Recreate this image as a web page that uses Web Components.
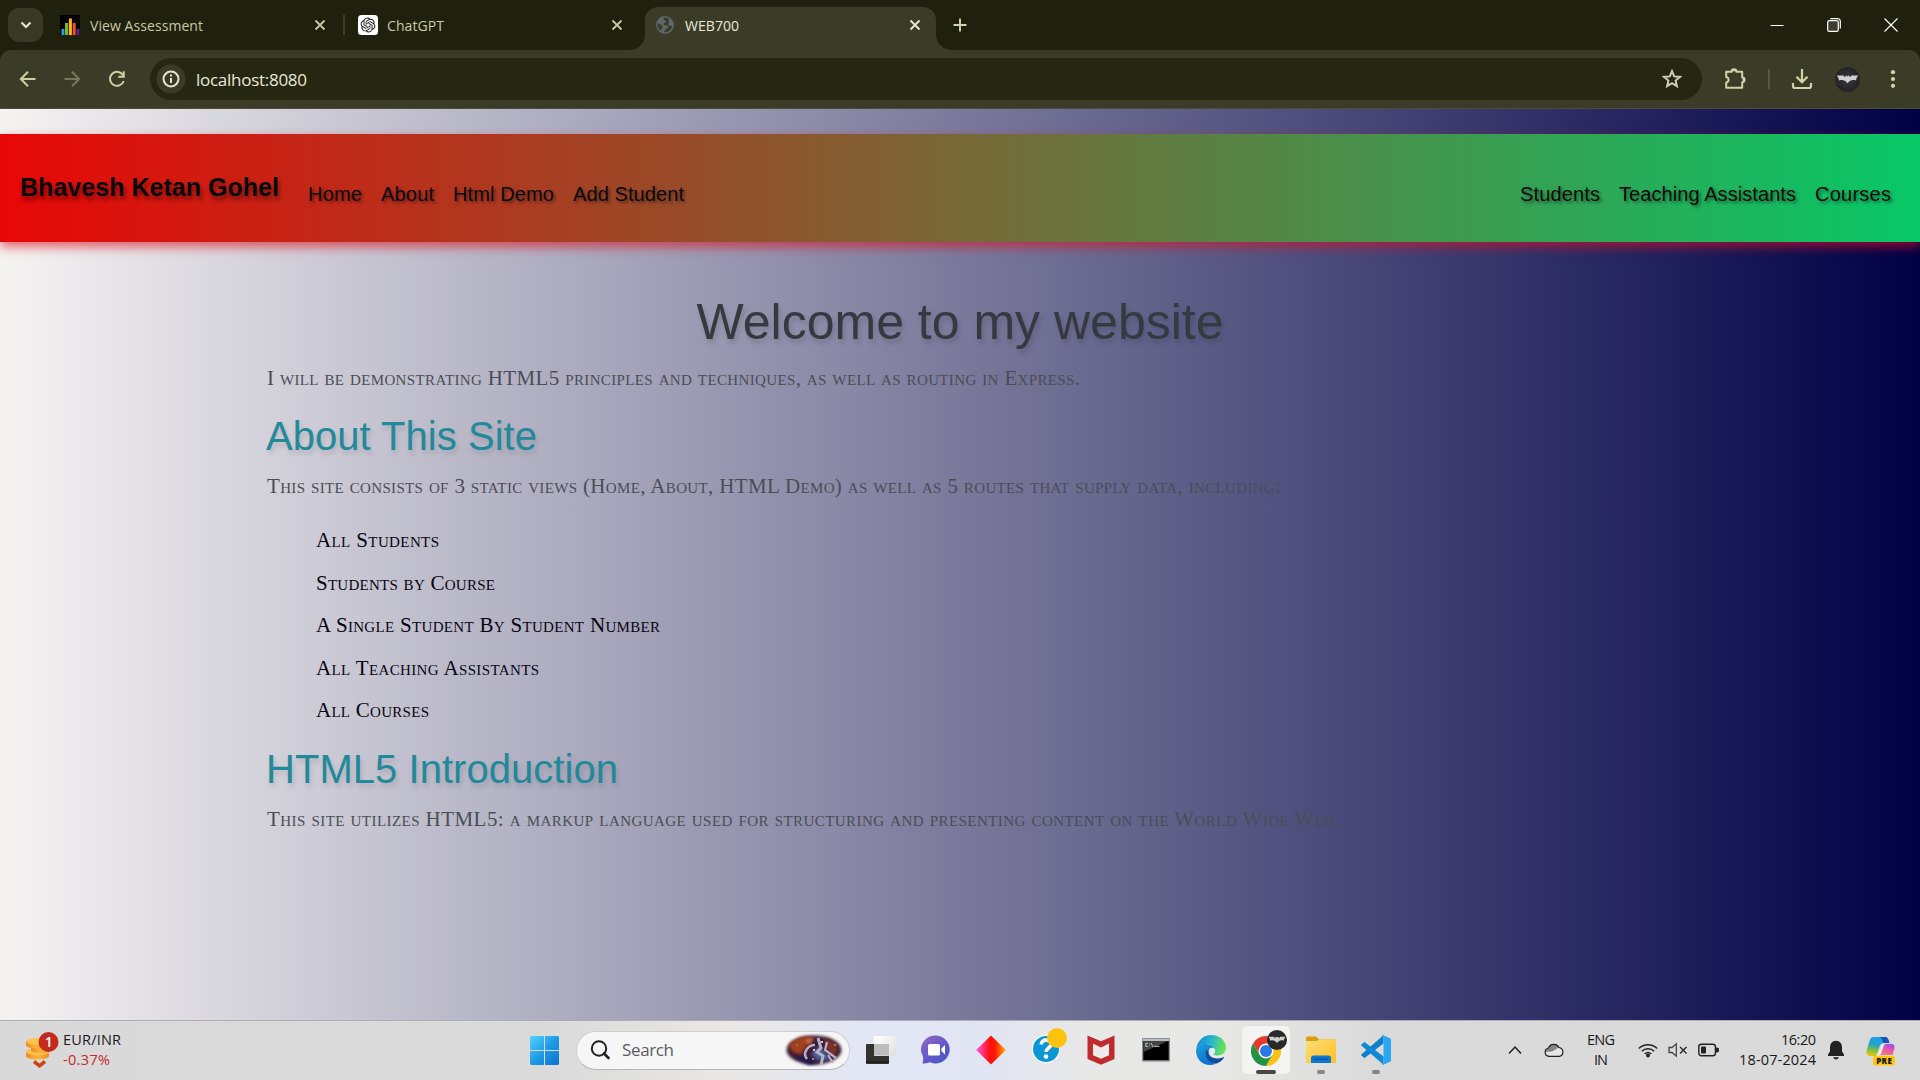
<!DOCTYPE html>
<html lang="en">
<head>
<meta charset="utf-8">
<title>WEB700</title>
<style>
html,body{margin:0;padding:0;width:1920px;height:1080px;overflow:hidden;background:#1f200d}
body{font-family:"Open Sans","Noto Sans",sans-serif}
</style>
</head>
<body>
<desktop-screen></desktop-screen>
<script>
const define=(name,html)=>customElements.define(name,class extends HTMLElement{
  constructor(){super();this.attachShadow({mode:'open'}).innerHTML=html;}
});

/* Single line of text spread over a given width through letter-spacing */
customElements.define('fit-text',class extends HTMLElement{
  constructor(){
    super();
    this.attachShadow({mode:'open'}).innerHTML='<style>:host{display:block;white-space:nowrap;flex:none}span{display:inline-block;font-variant-ligatures:none}</style><span><slot></slot></span>';
  }
  connectedCallback(){
    const w=+this.getAttribute('w'),s=this.shadowRoot.querySelector('span'),n=this.textContent.length;
    this.style.width=w+'px';
    s.style.letterSpacing=((w-s.getBoundingClientRect().width)/(n-1)).toFixed(3)+'px';
  }
});

const bat='<path d="M1.5 8.5H8.6L9.8 10.2 11.3 8.2 12 9.2H13L13.7 8.2 15.2 10.2 16.4 8.5H23.5C21.9 9.7 21.3 11.4 21.1 13.4 18.6 12.5 16.2 13 14.6 14.1L12.5 16.3 10.4 14.1C8.8 13 6.4 12.5 3.9 13.4 3.7 11.4 3.1 9.7 1.5 8.5Z" fill="#cfcfcf"/>';
const icons={
chevron:[14,14,'<path d="M2.5 4.5 7 9 11.5 4.5" fill="none" stroke="#e4e3d0" stroke-width="2.2"/>'],
bars:[20,20,'<path fill="#000" d="M0 0h20v20H0z"/><path fill="#1ba1e8" d="M1.5 14h3v6h-3z"/><path fill="#76b82a" d="M5 8h3.2v12H5z"/><path fill="#fdb913" d="M8.9 3.5h3V20h-3z"/><path fill="#f0522a" d="M12.7 8h3v12h-3z"/><path fill="#5c2483" d="M16.5 14h3v6h-3z"/>'],
gpt:[20,20,'<rect width="20" height="20" rx="3.5" fill="#fff"/><path transform="translate(2.600 2.600) scale(.617)" fill="#1c1c1c" d="M22.282 9.821a5.985 5.985 0 0 0-.516-4.910 6.046 6.046 0 0 0-6.510-2.900A6.065 6.065 0 0 0 4.981 4.182a5.985 5.985 0 0 0-3.998 2.900 6.046 6.046 0 0 0 .743 7.097 5.980 5.980 0 0 0 .510 4.911 6.051 6.051 0 0 0 6.515 2.900A5.985 5.985 0 0 0 13.260 24a6.056 6.056 0 0 0 5.772-4.206 5.990 5.990 0 0 0 3.998-2.900 6.056 6.056 0 0 0-.748-7.073zM13.260 22.430a4.476 4.476 0 0 1-2.876-1.040l.142-.081 4.778-2.758a.795.795 0 0 0 .393-.681v-6.737l2.020 1.169a.071.071 0 0 1 .038.052v5.583a4.504 4.504 0 0 1-4.495 4.493zM3.600 18.304a4.471 4.471 0 0 1-.535-3.014l.142.085 4.783 2.759a.771.771 0 0 0 .781 0l5.843-3.369v2.332a.080.080 0 0 1-.033.062L9.740 19.950a4.500 4.500 0 0 1-6.140-1.646zM2.341 7.896a4.485 4.485 0 0 1 2.366-1.973V11.600a.766.766 0 0 0 .388.677l5.815 3.354-2.020 1.169a.076.076 0 0 1-.071 0l-4.830-2.787A4.504 4.504 0 0 1 2.341 7.872zm16.597 3.856-5.834-3.388L15.119 7.200a.076.076 0 0 1 .071 0l4.830 2.792a4.494 4.494 0 0 1-.676 8.104v-5.677a.790.790 0 0 0-.406-.667zm2.010-3.023-.142-.085-4.773-2.782a.776.776 0 0 0-.786 0L9.410 9.230V6.897a.066.066 0 0 1 .028-.061l4.830-2.787a4.499 4.499 0 0 1 6.680 4.660zM8.307 12.863l-2.020-1.164a.080.080 0 0 1-.038-.057V6.074a4.499 4.499 0 0 1 7.376-3.453l-.142.080L8.704 5.459a.795.795 0 0 0-.393.681zm1.097-2.366 2.602-1.500 2.607 1.500v3l-2.597 1.500-2.607-1.500z"/>'],
globe:[18,18,'<circle cx="9" cy="9" r="8.9" fill="#62656d"/><path d="M2 6.500C3 9 6 8 6.600 10.200 7 12 5.200 12.600 5 14.700L3 13.500C1.200 10.800 1.200 8.800 2 6.500ZM8 1.600C6.600 3.200 8 4.400 10.200 5 10.300 6.800 7.600 6.600 7.600 8.400 8.300 10 11.500 8.900 12.600 10.300 12.900 12.200 9.800 12.300 9.300 13.400 9 14.900 7.700 15.400 8.200 16.500 12.800 16.600 16 13.200 16.100 10 14.600 10.500 13.800 9 12 8.800 11.600 7.400 13.600 6.800 12.800 5.200 12.300 4 13.600 3.300 12.600 2.600 11.200 1.800 9.400 1.500 8 1.600Z" fill="#3b3c27"/>'],
close:[12,12,'<path d="M1.500 1.500 10.500 10.500M10.500 1.500 1.500 10.500" stroke="currentColor" stroke-width="1.800" fill="none"/>'],
plus:[14,14,'<path d="M7 .5V13.500M.5 7H13.500" stroke="#d3d3ab" stroke-width="1.900"/>'],
min:[14,14,'<path d="M.5 7.500H13.500" stroke="#fff" stroke-width="1"/>'],
restore:[14,14,'<rect x=".7" y="2.700" width="10.600" height="10.600" rx="1.600" fill="#77776c" fill-opacity=".35" stroke="#fff" stroke-width="1.200"/><path d="M3.200.7H10.800A2.500 2.500 0 0 1 13.300 3.200V10.500" fill="none" stroke="#fff" stroke-width="1.200"/>'],
wclose:[14,14,'<path d="M.5.5 13.500 13.500M13.500.5.5 13.500" stroke="#fff" stroke-width="1.200"/>'],
back:[18,18,'<path d="M16.500 9H2.200M9 1.800 1.800 9 9 16.200" fill="none" stroke="#cdcda6" stroke-width="2"/>'],
fwd:[18,18,'<path d="M1.500 9H15.800M9 1.800 16.200 9 9 16.200" fill="none" stroke="#77775f" stroke-width="2"/>'],
reload:[18,18,'<path d="M15.200 5.500A7 7 0 1 0 15.700 11" fill="none" stroke="#cdcda6" stroke-width="2"/><path d="M15.800 1.200V6.800H10.200" fill="none" stroke="#cdcda6" stroke-width="2"/>'],
info:[30,30,'<circle cx="15" cy="15" r="14.500" fill="#3b3c27"/><circle cx="15" cy="15" r="7.500" fill="none" stroke="#e6e5d0" stroke-width="2"/><path d="M15 14V19M15 10.500V12.400" stroke="#e6e5d0" stroke-width="2"/>'],
star:[20,20,'<path d="M10 2.200 12.200 7.400 17.900 7.900 13.600 11.600 14.900 17.200 10 14.200 5.100 17.200 6.400 11.600 2.100 7.900 7.800 7.400Z" fill="none" stroke="#ceceb9" stroke-width="2"/>'],
puzzle:[22,22,'<path d="M2.200 3.700H7.600A2.300 2.300 0 0 1 12.400 3.700H18.200V9.400A2.300 2.300 0 0 1 18.200 14.200V19.800H2.200V14.600A2.900 2.900 0 0 0 2.200 8.900Z" fill="none" stroke="#d3d3ab" stroke-width="2" stroke-linejoin="round"/><path d="M7.800 3.200A2.200 2.200 0 0 1 12.200 3.200ZM18.600 9.600A2.200 2.200 0 0 1 18.600 14Z" fill="#d3d3ab"/>'],
download:[22,22,'<path d="M11 1V13.500M5.500 8.700 11 14.200 16.500 8.700" fill="none" stroke="#d3d3ab" stroke-width="2.200"/><path d="M2 15V18A2 2 0 0 0 4 20H18A2 2 0 0 0 20 18V15" fill="none" stroke="#d3d3ab" stroke-width="2.200"/>'],
batman:[25,25,'<defs><radialGradient id="b"><stop offset="0" stop-color="#3a3a3e"/><stop offset="1" stop-color="#222226"/></radialGradient></defs><circle cx="12.500" cy="12.500" r="12.500" fill="url(#b)"/>'+bat],
dots:[6,20,'<g fill="#d3d3ab"><circle cx="3" cy="3.200" r="2.100"/><circle cx="3" cy="10" r="2.100"/><circle cx="3" cy="16.800" r="2.100"/></g>'],
coins:[36,40,'<defs><linearGradient id="c"><stop offset="0" stop-color="#e9861d"/><stop offset=".5" stop-color="#ffb53c"/><stop offset="1" stop-color="#ef8f1e"/></linearGradient></defs><path d="M1 22V26C1 30.500 24 30.500 24 26V22Z" fill="url(#c)"/><ellipse cx="12.500" cy="21.800" rx="11.500" ry="3.600" fill="#ffc04c"/><path d="M6 15.500V20C6 24 25 24 25 20V15.500Z" fill="url(#c)"/><ellipse cx="15.500" cy="15.500" rx="9.500" ry="3" fill="#ffc04c"/><path d="M1 11.500V15C1 19.500 20 19.500 20 15V11.500Z" fill="url(#c)"/><ellipse cx="10.500" cy="11.300" rx="9.500" ry="3.300" fill="#ffc355"/><path d="M9 31.500 14.500 35.800 20 31.500" fill="none" stroke="#cf4517" stroke-width="3.600"/><circle cx="23.500" cy="12" r="10" fill="#c42b1c"/><text x="23.700" y="17" font-family="Open Sans" font-size="14" font-weight="600" text-anchor="middle" fill="#fff">1</text>'],
win:[29,29,'<defs><linearGradient id="w2" x1="0" y1="0" x2="29" y2="29" gradientUnits="userSpaceOnUse"><stop offset="0" stop-color="#52d5ff"/><stop offset=".5" stop-color="#1f9be6"/><stop offset="1" stop-color="#0873d0"/></linearGradient></defs><path fill="url(#w2)" d="M1 0H14V14H0V1ZM15 0H28L29 1V14H15ZM0 15H14V29H1L0 28ZM15 15H29V28L28 29H15Z"/>'],
search:[20,20,'<circle cx="9" cy="8.500" r="7.200" fill="none" stroke="#222" stroke-width="2"/><path d="M14 13.500 18.500 18" stroke="#222" stroke-width="2.600" stroke-linecap="round"/>'],
nebula:[62,34,'<defs><filter id="f" x="-20%" y="-20%" width="140%" height="140%"><feGaussianBlur stdDeviation="1.500"/></filter><filter id="g"><feGaussianBlur stdDeviation=".6"/></filter></defs><ellipse cx="31" cy="17" rx="27.500" ry="14.500" fill="#3c1f35" filter="url(#f)"/><g filter="url(#f)"><path d="M6 13C11 4 25 2 31 5L24 13 18 21C12 21 8 18 6 13Z" fill="#a13f1e"/><path d="M41 6C49 7 54 10 55 17L50 24 43 15Z" fill="#7b3028"/><path d="M12 24C23 20 27 29 37 30L26 32Z" fill="#1d1848"/><path d="M28 21 36 13 43 20 47 27 34 27Z" fill="#50619c"/><path d="M22 7 31 5 27 12Z" fill="#d2703c"/></g><g fill="none" stroke="#b3b2ca" filter="url(#g)"><path d="M35 5 38 15 34 19 40 23 38 32" stroke-width="3"/><path d="M44 9 42 17 53 25M45 22 50 30" stroke-width="2.200"/><path d="M24 26C19 20 25 12 32 12" stroke-width="2.500"/></g><g fill="#fff"><circle cx="31" cy="17" r="1"/><circle cx="30" cy="26" r=".8"/><circle cx="39" cy="9" r="1"/><circle cx="52" cy="12" r=".7"/><circle cx="14" cy="12" r=".5"/></g>'],
taskview:[30,28,'<defs><linearGradient id="t" x2="1" y2="1"><stop offset="0" stop-color="#fff"/><stop offset="1" stop-color="#e0e0e2"/></linearGradient></defs><rect y="8" width="23" height="20" rx="1" fill="#32322f"/><path d="M0 26H23" stroke="#111"/><rect x="8" width="22" height="20" rx="1" fill="url(#t)"/><path d="M8 8H23V19.500H8Z" fill="#bcbcbc"/>'],
chat:[30,30,'<defs><linearGradient id="h" x1="0" y1="0" x2=".7" y2="1"><stop offset="0" stop-color="#9a68b8"/><stop offset=".5" stop-color="#6a5bcb"/><stop offset="1" stop-color="#4e55c8"/></linearGradient></defs><path d="M15 .5A14 14 0 1 1 9 27.300Q5 29 1.300 28.200 2.600 25.500 2 21.500A14 14 0 0 1 15 .5Z" fill="url(#h)"/><rect x="7" y="9" width="12" height="11.500" rx="1.500" fill="#fff"/><path d="M20.500 13.500 24 10V19.500L20.500 16Z" fill="#fff"/>'],
diamond:[30,30,'<defs><linearGradient id="d"><stop offset="0" stop-color="#ff55e0"/><stop offset=".45" stop-color="#ff1010"/><stop offset=".65" stop-color="#ff1c00"/><stop offset="1" stop-color="#ffb400"/></linearGradient></defs><path d="M15 .5 29.800 15 15 29.500.2 15Z" fill="url(#d)"/>'],
help:[38,38,'<circle cx="16" cy="21" r="14.300" fill="#fff"/><circle cx="16" cy="21" r="13" fill="#0a97d5"/><path d="M11.300 16.500C11.300 10.500 21 10.800 21 16.300 21 20 16 20 16 24" fill="none" stroke="#fff" stroke-width="3.600"/><circle cx="16" cy="28.600" r="2.300" fill="#fff"/><circle cx="27" cy="10" r="10" fill="#ffc20e"/>'],
mcafee:[28,30,'<path d="M.5.5 14 6.300 27.500.5V24L14 29.800.5 24Z" fill="#c02b2f"/><path d="M6 8.500 14 12.500 22 8.500V20.200L14 23.800 6 20.200Z" fill="#eeeae7"/>'],
cmd:[28,24,'<rect x=".6" y=".6" width="26.800" height="22.300" fill="#000" stroke="#8b9096" stroke-width="1.400"/><path d="M1 2H27" stroke="#ccd1d8" stroke-width="1.800"/><path d="M1.500 3H26L1.500 14Z" fill="#444"/><path d="M5.800 5.300H3.800V8.500H5.800M7.300 5.500V6.300M7.300 7.700V8.500M9 5 11 8.800M12 8.300H17.500" stroke="#ddd" fill="none" stroke-width=".9"/>'],
edge:[30,30,'<defs><linearGradient id="e1" x1="0" y1=".2" x2="1" y2=".4"><stop offset="0" stop-color="#1287d8"/><stop offset=".5" stop-color="#28b5cf"/><stop offset="1" stop-color="#67e64c"/></linearGradient><linearGradient id="e2" x1="0" y1="0" x2=".6" y2="1"><stop offset="0" stop-color="#1ba0d8"/><stop offset="1" stop-color="#0b71cf"/></linearGradient></defs><path d="M.3 14A15 15 0 0 1 15 0C24 0 30 6 30 12.500 30 17.500 26 20.500 21.500 20.500 18 20.500 16.800 19.200 17.500 18 18.500 16.500 18 9 10.500 9 5 9 1 11 .3 14Z" fill="url(#e1)"/><path d="M.1 15C1 10.500 5.500 8.600 10 9 15 9.300 18.500 12 18.200 16 16 14 12 15.500 12 20 12 25.500 17 29 20 28.700 10 33-.5 26 .1 15Z" fill="url(#e2)"/><path d="M10 15C8 23 14 28 20 28.700 24 27.500 27 25 28 22.500 27.800 21.700 27 22.300 26 22.700 19 25 12 22 12.200 15.800Z" fill="#124c98"/><circle cx="16" cy="16" r="3.200" fill="#dfe9ef"/>'],
chrome:[40,40,'<g transform="translate(-1 0)"><path d="M16 15.500H29A15 15 0 0 1 16 38L22.500 26.700Z" fill="#fbc116"/><path d="M9.500 26.700 3 15.500A15 15 0 0 0 16 38L22.500 26.700Z" fill="#229342"/><path d="M3 15.500A15 15 0 0 1 29 15.500H16L9.500 26.700Z" fill="#e33b2e"/><circle cx="16" cy="23" r="7.500" fill="#fff"/><circle cx="16" cy="23" r="6" fill="#2878e8"/></g><g transform="translate(16 2) scale(.8)"><circle cx="12.500" cy="12.500" r="12.500" fill="#29292b"/>'+bat+'</g>'],
folder:[30,28,'<defs><linearGradient id="o" x2="1" y2="1"><stop offset="0" stop-color="#ffe07a"/><stop offset="1" stop-color="#ffbd22"/></linearGradient></defs><path d="M0 2A1.500 1.500 0 0 1 1.500.5H10L13 3.500H30V12H0Z" fill="#dd9c09"/><path d="M0 5H10.500L13.500 3.500H29A1 1 0 0 1 30 4.500V27H0Z" fill="url(#o)"/><path d="M5 27V22A2.500 2.500 0 0 1 7.500 19.500H22.500A2.500 2.500 0 0 1 25 22V27Z" fill="#0a78d1"/><path d="M8.500 23.200H21.500" stroke="#064f94" stroke-width="1.300"/>'],
vscode:[30,30,'<path d="M22.500.3V8.500L3.500 23 .3 20.500V19.500Z" fill="#0f7fca"/><path d="M.3 9.500 3.500 7 22.500 21.500V29.700L.3 10.500Z" fill="#1089d6"/><path d="M21 .8 22.300.2 29 3.200Q30 3.800 30 5V25Q30 26.200 29 26.800L22.300 29.800 21 29.200 22.500 28V2Z" fill="#2aa6f2"/>'],
up:[14,10,'<path d="M1 8.500 7 2 13 8.500" fill="none" stroke="#222" stroke-width="1.500"/>'],
cloud:[20,16,'<path d="M5 14.300A4.200 4.200 0 0 1 4.500 6 5.800 5.800 0 0 1 15 5.500 4.500 4.500 0 0 1 15.500 14.300Z" fill="#e6e6e6"/><path d="M1.500 10C1.800 7 3.500 6 4.800 6 6.500.3 13.500 1 15 5.500L8 9.500Z" fill="#858585"/><path d="M5 14.300A4.200 4.200 0 0 1 4.500 6 5.800 5.800 0 0 1 15 5.500 4.500 4.500 0 0 1 15.500 14.300Z" fill="none" stroke="#222" stroke-width="1.200"/>'],
wifi:[20,16,'<g fill="none" stroke="#222" stroke-width="1.400"><path d="M.8 6.500A13 13 0 0 1 19.200 6.500M3.800 9.300A8.800 8.800 0 0 1 16.200 9.300M6.700 12A5 5 0 0 1 13.300 12"/></g><circle cx="10" cy="13.500" r="1.900" fill="#222"/>'],
mute:[20,16,'<path d="M1 5.500H4L8.300 1.800V14.200L4 10.500H1Z" fill="none" stroke="#444" stroke-width="1.300"/><path d="M12 5 18.500 11.500M18.500 5 12 11.500" stroke="#222" stroke-width="1.300"/>'],
battery:[21,16,'<rect x=".8" y="2.200" width="16.600" height="11.600" rx="2.500" fill="none" stroke="#222" stroke-width="1.400"/><rect x="3" y="4.500" width="5" height="7" rx="1" fill="#222"/><path d="M18 6H19A1.500 1.500 0 0 1 19 10H18Z" fill="#222" stroke="#222"/>'],
bell:[18,20,'<path d="M9 .8C5 .8 3 4 3 7.500V11.500L1 14.500V16H17V14.500L15 11.500V7.500C15 4 13 .8 9 .8Z" fill="#222"/><path d="M6 17.300H12L10.500 19.300H7.500Z" fill="#222"/>'],
copilot:[30,30,'<defs><linearGradient id="p1" x1=".4" y1="0" x2=".2" y2="1"><stop offset="0" stop-color="#1aa0ea"/><stop offset=".4" stop-color="#21a6c4"/><stop offset=".7" stop-color="#86bf3d"/><stop offset="1" stop-color="#f2c50d"/></linearGradient><linearGradient id="p2" x1=".7" y1="0" x2=".2" y2="1"><stop offset="0" stop-color="#a04cf0"/><stop offset=".5" stop-color="#ec5aa4"/><stop offset="1" stop-color="#ff8753"/></linearGradient></defs><path d="M8 1H19C21 1 22 2.500 22.500 4L23.500 7H18C15 7 14 9 13.300 11.500L11 18.500C10.500 20 9 20.500 7 20H3C.5 19 0 17 .8 14L3.500 5C4.200 2.500 5.500 1 8 1Z" fill="url(#p1)"/><path d="M14 1H19C21 1 22 2.500 22.500 4L23.500 7H17C16.500 4 16 2 14 1Z" fill="#174fc4"/><path d="M19 8H25C28 8 29 10 28.300 13L26.500 19H11C13 19 14 17 14.700 15L16 11C16.500 9 17.500 8 19 8Z" fill="url(#p2)"/><path d="M17 8H19C17.500 9 16.500 14 15.500 17 15 18.500 14 19 12 19H10.500Z" fill="#eee6f0"/><rect x="7" y="20" width="22" height="9.500" rx="2" fill="#ffc60a"/><text x="18.200" y="27.600" font-family="Open Sans" font-weight="800" font-size="8" letter-spacing=".4" text-anchor="middle" fill="#161616">PRE</text>']
};
customElements.define('ui-icon',class extends HTMLElement{
  constructor(){super();this.attachShadow({mode:'open'});}
  connectedCallback(){
    const [w,h,body]=icons[this.getAttribute('name')];
    this.shadowRoot.innerHTML=`<style>:host{display:block;flex:none}svg{display:block}</style><svg width="${w}" height="${h}" viewBox="0 0 ${w} ${h}">${body}</svg>`;
  }
});

define('browser-tab',`<style>
:host{display:flex;align-items:center;box-sizing:border-box;height:36px;margin-top:7px;font-size:14px;line-height:20px;color:#c9c9a6;position:relative}
.t{margin:2px 0 0 var(--gap,10px);flex:1}
:host([active]){height:43px;padding-bottom:7px;background:#3b3c27;border-radius:13px 13px 0 0;color:#e9e8d8}
:host([active])::before,:host([active])::after{content:"";position:absolute;bottom:0;width:15px;height:15px}
:host([active])::before{left:-15px;background:radial-gradient(circle at 0 0,transparent 14.500px,#3b3c27 15px)}
:host([active])::after{right:-15px;background:radial-gradient(circle at 100% 0,transparent 14.500px,#3b3c27 15px)}
</style><slot name="icon"></slot><div class="t"><slot></slot></div><ui-icon name="close"></ui-icon>`);

define('tab-strip',`<style>
:host{display:flex;height:50px;background:#1f200d}
.menu{width:35px;height:34px;margin:8px 0 0 8px;border-radius:11px;background:#383925;display:grid;place-items:center}
.sep{width:2px;height:20px;margin-top:15px;background:#3d3e2a}
.plus{margin:18px 0 0 17px}
.win{margin-left:auto;display:flex;height:49px;align-items:center;padding-right:1px}
.win div{width:57px;display:grid;place-items:center}
</style>
<div class="menu"><ui-icon name="chevron"></ui-icon></div>
<browser-tab style="width:300px;padding:0 17px"><ui-icon slot="icon" name="bars"></ui-icon><fit-text w="113">View Assessment</fit-text></browser-tab>
<div class="sep"></div>
<browser-tab style="width:300px;padding:0 22px 0 13px;--gap:9px"><ui-icon slot="icon" name="gpt"></ui-icon><fit-text w="57">ChatGPT</fit-text></browser-tab>
<browser-tab active style="width:291px;padding-left:11px;padding-right:15px;--gap:11px"><ui-icon slot="icon" name="globe"></ui-icon><fit-text w="54">WEB700</fit-text></browser-tab>
<ui-icon class="plus" name="plus"></ui-icon>
<div class="win"><div><ui-icon name="min"></ui-icon></div><div><ui-icon name="restore"></ui-icon></div><div><ui-icon name="wclose"></ui-icon></div></div>`);

define('tool-bar',`<style>
:host{display:block;height:59px;background:#1f200d}
.bar{box-sizing:border-box;height:59px;display:flex;align-items:center;background:#3b3c27;border-radius:11px 11px 0 0;border-bottom:1px solid #4c4c3b;padding:0 24px 0 19px}
.url{flex:1;height:42px;border-radius:21px;background:#262713;margin:0 22px 0 24px;display:flex;align-items:center;padding:0 20px 0 6px;box-sizing:border-box}
.url fit-text{margin:1px 0 0 10px;font-size:17px;line-height:24px;color:#e9e8d8}
.url ui-icon:last-child{margin-left:auto}
.sep{width:2px;height:20px;background:#565641;margin:0 21px 0 22px}
</style><div class="bar">
<ui-icon name="back"></ui-icon><ui-icon name="fwd" style="margin:0 27px 0 26px"></ui-icon><ui-icon name="reload"></ui-icon>
<div class="url"><ui-icon name="info"></ui-icon><fit-text w="111">localhost:8080</fit-text><ui-icon name="star"></ui-icon></div>
<ui-icon name="puzzle"></ui-icon><div class="sep"></div><ui-icon name="download"></ui-icon><ui-icon name="batman" style="margin:0 30px 0 22px"></ui-icon><ui-icon name="dots"></ui-icon>
</div>`);

define('site-nav',`<style>
:host{display:flex;box-sizing:border-box;height:108px;padding:0 29px 0 20px;background:linear-gradient(to right,#e80707,#07c867);box-shadow:0 5px 10px rgba(225,15,30,.62);font-family:"Liberation Sans",Arial,sans-serif;color:#0a0a0a;position:relative;z-index:1}
.brand{font-weight:bold;font-size:25px;line-height:30px;margin:38px 29px 0 0;text-shadow:2px 4px 4px rgba(0,0,0,.42)}
nav{display:flex;gap:19px;font-size:20px;line-height:24px;margin-top:48px;text-shadow:2px 2px 3px rgba(0,0,0,.45)}
nav+nav{margin-left:auto}
</style>
<fit-text class="brand" w="259">Bhavesh Ketan Gohel</fit-text>
<nav><fit-text w="54">Home</fit-text><fit-text w="53">About</fit-text><fit-text w="101">Html Demo</fit-text><fit-text w="111">Add Student</fit-text></nav>
<nav><fit-text w="80">Students</fit-text><fit-text w="177">Teaching Assistants</fit-text><fit-text w="76">Courses</fit-text></nav>`);

define('site-section',`<style>
:host{display:block}
::slotted(*){display:block}
h2{margin:0 0 10px -1px;font:400 40px/48px "Liberation Sans",Arial,sans-serif;color:#22899b;text-shadow:2px 4px 5px rgba(0,0,0,.13)}
</style><h2><slot name="title"></slot></h2><slot></slot>`);

define('route-list',`<style>
:host{display:block;padding-left:49px;color:#060612}
::slotted(*){line-height:42.500px}
</style><slot></slot>`);

define('site-page',`<style>
:host{display:block;box-sizing:border-box;height:911px;padding-top:25px;overflow:hidden;background:linear-gradient(to right,#f5f3f2,#000045)}
main{padding:50px 267px 0;font:21px/32px "Liberation Serif","Times New Roman",serif;font-variant-caps:small-caps;color:#494e55}
h1{display:flex;justify-content:center;margin:0 0 10px;font:400 50px/60px "Liberation Sans",Arial,sans-serif;color:#343a40;text-shadow:2px 4px 5px rgba(0,0,0,.15)}
.a{margin-top:18px}.b{margin-top:13px}route-list{margin-top:17px}
</style>
<site-nav></site-nav>
<main>
<h1><fit-text w="527">Welcome to my website</fit-text></h1>
<fit-text w="813">I will be demonstrating HTML5 principles and techniques, as well as routing in Express.</fit-text>
<site-section class="a"><fit-text slot="title" w="271">About This Site</fit-text><fit-text w="1014">This site consists of 3 static views (Home, About, HTML Demo) as well as 5 routes that supply data, including:</fit-text></site-section>
<route-list><fit-text w="123">All Students</fit-text><fit-text w="179">Students by Course</fit-text><fit-text w="344">A Single Student By Student Number</fit-text><fit-text w="223">All Teaching Assistants</fit-text><fit-text w="113">All Courses</fit-text></route-list>
<site-section class="b"><fit-text slot="title" w="352">HTML5 Introduction</fit-text><fit-text w="1073">This site utilizes HTML5: a markup language used for structuring and presenting content on the World Wide Web.</fit-text></site-section>
</main>`);

define('task-item',`<style>
:host{width:55px;height:59px;display:grid;place-items:center;position:relative;flex:none}
.tile{width:48px;height:48px;border-radius:5px;display:grid;place-items:center;margin-bottom:1px}
:host([active]) .tile{background:#f4f4f3;box-shadow:0 0 0 1px #e0e0df}
:host([open])::after,:host([active])::after{content:"";position:absolute;bottom:6px;left:50%;transform:translateX(-50%);width:8px;height:4px;border-radius:2px;background:#858585}
:host([active])::after{width:20px;background:#4a4745}
</style><div class="tile"><slot></slot></div>`);

define('task-bar',`<style>
:host{display:flex;box-sizing:border-box;height:60px;border-top:1px solid #aeadb3;align-items:center;background:linear-gradient(to right,#d9d9d9 0,#dadada 550px,#e9e8e6 730px,#e3e6f4 850px,#e2e5f3 990px,#e8e8e7 1090px,#e7e7e6 1220px,#dadada 1380px,#dadada 100%);font-size:14.500px;line-height:20px;color:#191919}
.widget{display:flex;width:505px;padding:0 0 2px 25px;box-sizing:border-box}
.widget ui-icon{margin-right:2px}
.red{color:#c42b1c}
.search{box-sizing:border-box;width:274px;height:39px;margin:0 3.500px 0 17px;border:1px solid #cfcfcf;border-bottom-color:#b5b5b5;border-radius:20px;background:#f6f6f7;display:flex;align-items:center;padding:0 4px 1px 13px}
.search fit-text{font-size:17px;line-height:24px;color:#5c5c5c;margin-left:12px}
.search ui-icon:last-child{margin-left:auto}
.tray{margin-left:auto;display:flex;align-items:center;padding:0 24px 2px 0}
.lang,.time{display:flex;flex-direction:column}
.lang{align-items:center;margin:0 23px 0 23px}
.time{align-items:flex-end}
</style>
<div class="widget"><ui-icon name="coins"></ui-icon><div><fit-text w="58">EUR/INR</fit-text><fit-text w="47" class="red">-0.37%</fit-text></div></div>
<ui-icon name="win" style="margin-left:25px"></ui-icon>
<div class="search"><ui-icon name="search"></ui-icon><fit-text w="52">Search</fit-text><ui-icon name="nebula"></ui-icon></div>
<task-item><ui-icon name="taskview"></ui-icon></task-item>
<task-item><ui-icon name="chat"></ui-icon></task-item>
<task-item><ui-icon name="diamond"></ui-icon></task-item>
<task-item><ui-icon name="help" style="margin:-6px -3px 0 3px"></ui-icon></task-item>
<task-item><ui-icon name="mcafee"></ui-icon></task-item>
<task-item><ui-icon name="cmd"></ui-icon></task-item>
<task-item><ui-icon name="edge"></ui-icon></task-item>
<task-item active><ui-icon name="chrome" style="margin:-5px -10px 0 0"></ui-icon></task-item>
<task-item open><ui-icon name="folder"></ui-icon></task-item>
<task-item open><ui-icon name="vscode"></ui-icon></task-item>
<div class="tray"><ui-icon name="up"></ui-icon><ui-icon name="cloud" style="margin-left:22px"></ui-icon>
<div class="lang"><fit-text w="28">ENG</fit-text><fit-text w="14">IN</fit-text></div>
<ui-icon name="wifi"></ui-icon><ui-icon name="mute" style="margin:0 10px"></ui-icon><ui-icon name="battery"></ui-icon>
<div class="time" style="margin:0 11px 0 20px"><fit-text w="35">16:20</fit-text><fit-text w="77">18-07-2024</fit-text></div>
<ui-icon name="bell"></ui-icon><ui-icon name="copilot" style="margin:2px 0 0 21px"></ui-icon></div>`);

define('desktop-screen',`<style>:host{display:flex;flex-direction:column;width:1920px;height:1080px}</style>
<tab-strip></tab-strip><tool-bar></tool-bar><site-page></site-page><task-bar></task-bar>`);
</script>
</body>
</html>
